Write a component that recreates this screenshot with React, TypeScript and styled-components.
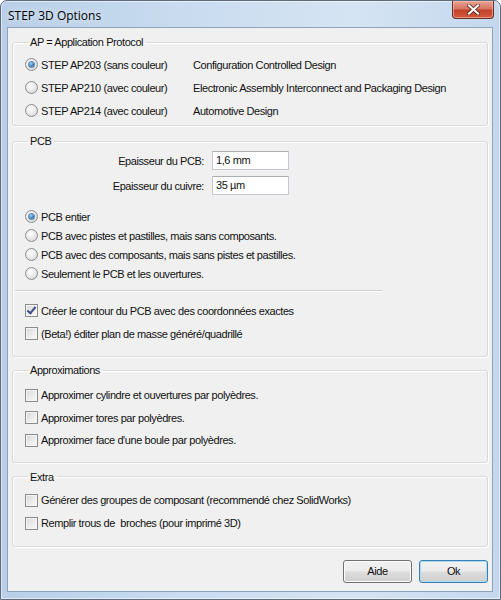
import React from "react";
import styled, { createGlobalStyle } from "styled-components";

const Global = createGlobalStyle`
  html, body {
    margin: 0;
    padding: 0;
    background: #ffffff;
  }
  body {
    font-family: "Liberation Sans", Arial, sans-serif;
    font-size: 11px;
    color: #111;
  }
`;

const App = () => {
  return (
    <>
      <Global />
      <Window>
        <TitleBar>
          <Title>STEP 3D Options</Title>
          <CloseBtn>
            <svg width="13" height="11" viewBox="0 0 13 11">
              <path d="M2 1.5 L11 9.5 M11 1.5 L2 9.5" stroke="#4a1a12" strokeWidth="3.6" strokeLinecap="square" />
              <path d="M2 1.5 L11 9.5 M11 1.5 L2 9.5" stroke="#fff" strokeWidth="2.2" strokeLinecap="square" />
            </svg>
          </CloseBtn>
        </TitleBar>
        <Client>
          <Group $pt={5} $pb={3}>
            <Legend>AP = Application Protocol</Legend>
            <ProtoRow>
              <Option><Radio $on /> STEP AP203 (sans couleur)</Option>
              <Desc>Configuration Controlled Design</Desc>
            </ProtoRow>
            <ProtoRow>
              <Option><Radio /> STEP AP210 (avec couleur)</Option>
              <Desc>Electronic Assembly Interconnect and Packaging Design</Desc>
            </ProtoRow>
            <ProtoRow>
              <Option><Radio /> STEP AP214 (avec couleur)</Option>
              <Desc>Automotive Design</Desc>
            </ProtoRow>
          </Group>

          <Group $pt={1} $pb={11} $mt={9}>
            <Legend>PCB</Legend>
            <FieldRow>
              <FieldLabel>Epaisseur du PCB:</FieldLabel>
              <TextBox>1,6 mm</TextBox>
            </FieldRow>
            <FieldRow>
              <FieldLabel>Epaisseur du cuivre:</FieldLabel>
              <TextBox>35 µm</TextBox>
            </FieldRow>
            <RadioList>
              <Option $h={19}><Radio $on /> PCB entier</Option>
              <Option $h={19}><Radio /> PCB avec pistes et pastilles, mais sans composants.</Option>
              <Option $h={19}><Radio /> PCB avec des composants, mais sans pistes et pastilles.</Option>
              <Option $h={19}><Radio /> Seulement le PCB et les ouvertures.</Option>
            </RadioList>
            <Separator />
            <Option $h={23}><Check $on /> Créer le contour du PCB avec des coordonnées exactes</Option>
            <Option $h={23}><Check /> (Beta!) éditer plan de masse généré/quadrillé</Option>
          </Group>

          <Group $pt={8} $pb={10} $mt={7}>
            <Legend>Approximations</Legend>
            <Option $h={22.5}><Check /> Approximer cylindre et ouvertures par polyèdres.</Option>
            <Option $h={22.5}><Check /> Approximer tores par polyèdres.</Option>
            <Option $h={22.5}><Check /> Approximer face d'une boule par polyèdres.</Option>
          </Group>

          <Group $pt={6} $pb={11} $mt={8}>
            <Legend>Extra</Legend>
            <Option $h={23}><Check /> Générer des groupes de composant (recommendé chez SolidWorks)</Option>
            <Option $h={23}><Check /> Remplir trous de &nbsp;broches (pour imprimé 3D)</Option>
          </Group>

          <ButtonBar>
            <Button>Aide</Button>
            <Button $default>Ok</Button>
          </ButtonBar>
        </Client>
      </Window>
    </>
  );
};
export default App;

const Window = styled.div`
  width: 501px;
  height: 600px;
  box-sizing: border-box;
  display: flex;
  flex-direction: column;
  border: 1px solid #5d6b7c;
  border-radius: 7px 7px 0 0;
  background: linear-gradient(90deg, #b9cfe7 0%, #c8dbef 35%, #d5e4f3 70%, #c4d8ed 100%);
  box-shadow: inset 0 0 0 1px rgba(255, 255, 255, 0.55);
`;

const TitleBar = styled.div`
  height: 26px;
  display: flex;
  align-items: flex-start;
  justify-content: space-between;
  padding: 0 6px 0 7px;
`;

const Title = styled.div`
  font-family: "Open Sans", "Liberation Sans", sans-serif;
  font-size: 12px;
  color: #000;
  margin-top: 6px;
  text-shadow: 0 0 6px rgba(255, 255, 255, 0.9);
`;

const CloseBtn = styled.div`
  width: 42px;
  height: 18px;
  box-sizing: border-box;
  display: flex;
  align-items: center;
  justify-content: center;
  border: 1px solid #6a3026;
  border-top: none;
  border-radius: 0 0 4px 4px;
  background: linear-gradient(180deg, #e8a595 0%, #d8745f 45%, #c2432b 55%, #d45a3e 100%);
  box-shadow: inset 0 0 0 1px rgba(255, 210, 200, 0.5);
`;

const Client = styled.div`
  flex: 1;
  margin: 0 7px 7px 6px;
  border: 1px solid #8ea3bb;
  background: #f0f0f0;
  padding: 8px 4px 0 4px;
  display: flex;
  flex-direction: column;
  letter-spacing: -0.42px;
`;

const Group = styled.fieldset<{ $pt: number; $pb: number; $mt?: number }>`
  margin: ${(p) => p.$mt ?? 0}px 0 0 0;
  padding: ${(p) => p.$pt}px 8px ${(p) => p.$pb}px 12px;
  border: 1px solid #d9d9d9;
  border-radius: 3px;
  box-shadow: inset 1px 1px 0 #ffffff, 1px 1px 0 #ffffff;
  min-width: 0;
`;

const Legend = styled.legend`
  padding: 0 3px 0 2px;
  margin-left: 3px;
  line-height: 12px;
  color: #111;
`;

const ProtoRow = styled.div`
  display: flex;
  align-items: center;
  height: 23px;
`;

const Option = styled.div<{ $h?: number }>`
  display: flex;
  align-items: center;
  gap: 3px;
  height: ${(p) => p.$h ?? 23}px;
  white-space: nowrap;
  ${ProtoRow} & {
    width: 168px;
  }
`;

const Desc = styled.span`
  white-space: nowrap;
`;

const Radio = styled.span<{ $on?: boolean }>`
  width: 13px;
  height: 13px;
  box-sizing: border-box;
  border-radius: 50%;
  border: 1px solid #8b8c8c;
  background: radial-gradient(circle at 40% 35%, #ffffff 0%, #e6e6e6 55%, #cfcfcf 100%);
  display: inline-flex;
  align-items: center;
  justify-content: center;
  flex: none;
  &::after {
    content: "";
    display: ${(p) => (p.$on ? "block" : "none")};
    width: 5px;
    height: 5px;
    border-radius: 50%;
    background: radial-gradient(circle at 40% 35%, #a6d4f2 0%, #3d87c4 50%, #1b4f80 100%);
    box-shadow: 0 0 0 1px #6a8fb0;
  }
`;

const Check = styled.span<{ $on?: boolean }>`
  width: 13px;
  height: 13px;
  box-sizing: border-box;
  border: 1px solid #8b8c8c;
  background: linear-gradient(135deg, #d6d6d6 0%, #ececec 55%, #fbfbfb 100%);
  box-shadow: inset 0 0 0 1px #f4f4f4;
  flex: none;
  position: relative;
  &::after {
    content: "";
    display: ${(p) => (p.$on ? "block" : "none")};
    position: absolute;
    left: 3px;
    top: 0px;
    width: 3px;
    height: 7px;
    border: solid #3b4f86;
    border-width: 0 2px 2px 0;
    transform: rotate(40deg);
  }
`;

const FieldRow = styled.div`
  display: flex;
  align-items: center;
  height: 25px;
`;

const FieldLabel = styled.span`
  width: 179px;
  text-align: right;
  margin-right: 8px;
`;

const TextBox = styled.div`
  width: 77px;
  height: 19px;
  box-sizing: border-box;
  background: #fff;
  border: 1px solid #c5c9cf;
  border-top-color: #abadb3;
  padding: 2px 3px;
  line-height: 13px;
`;

const RadioList = styled.div`
  display: flex;
  flex-direction: column;
  margin-top: 9px;
`;

const Separator = styled.div`
  height: 1px;
  background: #d0d0d0;
  border-bottom: 1px solid #fff;
  margin: 7px 97px 7px -10px;
`;

const ButtonBar = styled.div`
  display: flex;
  justify-content: flex-end;
  gap: 7px;
  margin-top: 13px;
  padding-right: 0;
`;

const Button = styled.div<{ $default?: boolean }>`
  width: 69px;
  height: 23px;
  box-sizing: border-box;
  display: flex;
  align-items: center;
  justify-content: center;
  border-radius: 3px;
  border: 1px solid ${(p) => (p.$default ? "#3c7fb1" : "#707070")};
  background: linear-gradient(180deg, #f2f2f2 0%, #ebebeb 48%, #dddddd 52%, #cfcfcf 100%);
  box-shadow: inset 0 0 0 1px ${(p) => (p.$default ? "#a6dcf5" : "#fcfcfc")};
  color: #111;
`;
